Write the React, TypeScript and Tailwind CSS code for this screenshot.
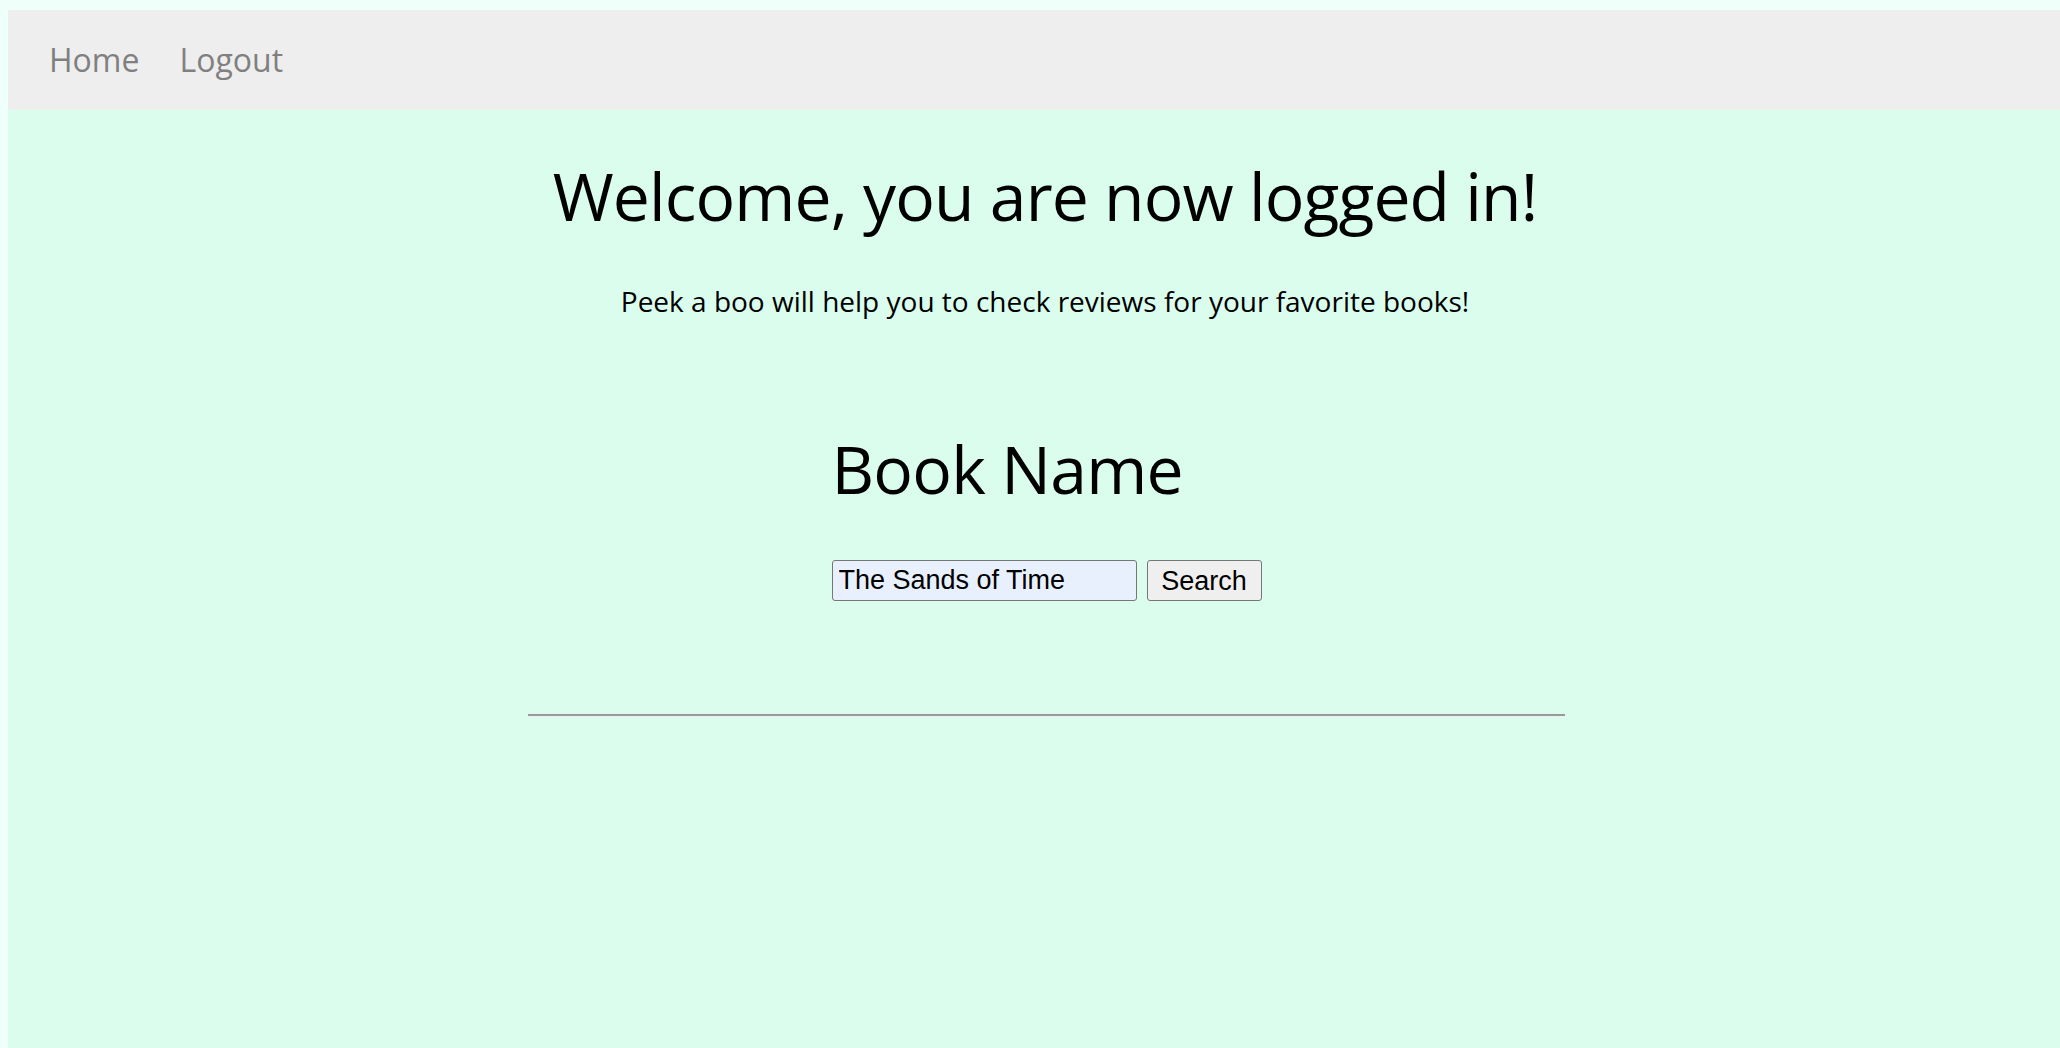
export default function App() {
  return (
    <div className="h-screen overflow-hidden bg-[#effffa] pt-[10px] pl-[8px] font-['Open_Sans',sans-serif]">
      <nav className="h-[100px] w-[2074px] bg-[#eeeeee] flex items-center gap-[40px] px-[41px]">
        <a href="#" className="text-[32px] leading-none text-[#808080]">
          Home
        </a>
        <a href="#" className="text-[32px] leading-none text-[#808080]">
          Logout
        </a>
      </nav>

      <main className="w-[2074px] h-[1000px] bg-[#dafdee] flex flex-col items-center">
        <h1 className="mt-[52px] text-[66px] leading-none tracking-[-0.9px] text-black">
          Welcome, you are now logged in!
        </h1>

        <p className="mt-[59px] text-[28px] leading-none text-black">
          Peek a boo will help you to check reviews for your favorite books!
        </p>

        <form className="w-[430px] ml-[3px] mt-[120px] flex flex-col">
          <h2 className="text-[66px] leading-none tracking-[-0.8px] text-black">
            Book Name
          </h2>
          <div className="mt-[59px] flex gap-[10px]">
            <input
              type="text"
              defaultValue="The Sands of Time"
              className="w-[305px] h-[41px] px-[6px] bg-[#e8f0fe] border border-[#767676] rounded-[3px] text-[27px] text-black font-['Liberation_Sans',Arial,sans-serif]"
            />
            <button
              type="button"
              className="w-[115px] h-[41px] bg-[#efefef] border border-[#767676] rounded-[3px] text-[27px] text-black font-['Liberation_Sans',Arial,sans-serif]"
            >
              Search
            </button>
          </div>
        </form>

        <hr className="mt-[113px] ml-[2px] w-[1037px] border-0 border-t-2 border-t-[#999999] border-b border-b-[#eeeeee]" />
      </main>
    </div>
  );
}
